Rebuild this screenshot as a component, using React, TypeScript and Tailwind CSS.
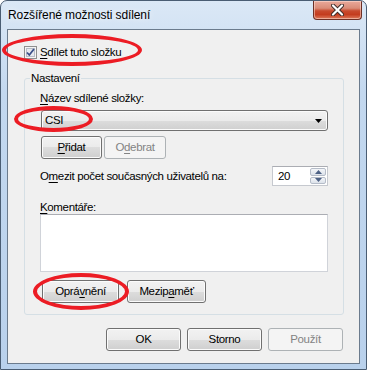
import React from "react";

const btn =
  "flex items-center justify-center h-[23px] rounded-[3px] border border-[#707070] bg-[linear-gradient(#f2f2f2_0%,#ebebeb_50%,#dddddd_50%,#cfcfcf_100%)] shadow-[inset_0_0_0_1px_#fbfbfb] text-black";
const btnDis =
  "flex items-center justify-center h-[23px] rounded-[3px] border border-[#adb2b5] bg-[#f4f4f4] text-[#838383]";

function U({ children }: { children: React.ReactNode }) {
  return <span className="underline underline-offset-[2px] decoration-[1px]">{children}</span>;
}

function CheckBox() {
  return (
    <svg width="13" height="13" viewBox="0 0 13 13" className="shrink-0">
      <rect x="0.5" y="0.5" width="12" height="12" fill="#f4f4f4" stroke="#8e8f8f" />
      <rect x="2.5" y="2.5" width="8" height="8" fill="#e6e9ee" stroke="#b6bcc6" />
      <path d="M3 6.5 L5.3 9 L10 3" fill="none" stroke="#3b5089" strokeWidth="1.8" strokeLinejoin="round" />
    </svg>
  );
}

export default function App() {
  return (
    <div className="relative w-[367px] h-[370px] overflow-hidden rounded-t-[7px] border border-[#4a5d73] bg-[linear-gradient(180deg,#dbe8f6_0%,#c3d8ef_25%,#b9d1ec_100%)] font-['Liberation_Sans',Arial,sans-serif] text-[11.5px] text-black tracking-[-0.35px]">
      {/* title bar */}
      <div className="flex h-[28px] items-start">
        <div className="pl-[7px] pt-[7px] text-[12px] tracking-[-0.1px] leading-[15px] [text-shadow:0_0_6px_#ffffff]">
          Rozšířené možnosti sdílení
        </div>
        <div className="ml-auto mr-[4px] flex h-[19px] w-[49px] items-center justify-center rounded-b-[4px] border border-t-0 border-[#6d3026] bg-[linear-gradient(#e9a99b_0%,#d98c78_40%,#c84a2e_55%,#c43c1f_75%,#dd7a5c_100%)] shadow-[inset_0_0_0_1px_rgba(255,230,220,0.5)]">
          <svg width="13" height="12" viewBox="0 0 13 12">
            <path d="M2 1.5 L11 10.5 M11 1.5 L2 10.5" stroke="#3b2a28" strokeWidth="4" strokeLinecap="round" />
            <path d="M2 1.5 L11 10.5 M11 1.5 L2 10.5" stroke="#ffffff" strokeWidth="2.2" strokeLinecap="round" />
          </svg>
        </div>
      </div>

      {/* client area */}
      <div className="mx-[6px] h-[335px] border border-[#6b7b8d] bg-[#f0f0f0] flex flex-col">
        <div className="ml-[16px] mt-[16px] flex h-[13px] items-center gap-[3px]">
          <CheckBox />
          <span className="leading-[15px]">
            <U>S</U>dílet tuto složku
          </span>
        </div>

        {/* group box */}
        <div className="relative ml-[16px] mt-[19px] h-[237px] w-[320px] rounded-[3px] border border-[#d5dfe5] flex flex-col">
          <span className="absolute -top-[8px] left-[5px] bg-[#f0f0f0] px-[1px] leading-[15px]">Nastavení</span>

          <div className="ml-[15px] mt-[12px] leading-[15px]">
            <U>N</U>ázev sdílené složky:
          </div>
          <div className="ml-[16px] mt-[4px] flex h-[21px] w-[287px] items-center rounded-[3px] border border-[#707070] bg-[linear-gradient(#f2f2f2_0%,#ebebeb_50%,#dddddd_50%,#cfcfcf_100%)] shadow-[inset_0_0_0_1px_#fbfbfb] pl-[3px] pr-[5px]">
            <span className="leading-[15px]">CSI</span>
            <svg width="7" height="4" viewBox="0 0 7 4" className="ml-auto">
              <path d="M0 0 H7 L3.5 4 Z" fill="#000" />
            </svg>
          </div>
          <div className="ml-[16px] mt-[5px] flex gap-[2px]">
            <div className={`${btn} w-[61px]`}>
              <span>
                <U>P</U>řidat
              </span>
            </div>
            <div className={`${btnDis} w-[62px]`}>
              <span>
                O<U>d</U>ebrat
              </span>
            </div>
          </div>

          <div className="ml-[15px] mt-[7px] flex h-[20px] w-[288px] items-center">
            <span className="leading-[15px]">
              O<U>m</U>ezit počet současných uživatelů na:
            </span>
            <div className="ml-auto flex h-[20px] w-[56px] border border-[#c6c9cf] border-t-[#abadb3] bg-white">
              <span className="pl-[5px] leading-[18px]">20</span>
              <div className="ml-auto mr-[1px] flex w-[16px] flex-col gap-[1px] py-[1px]">
                <div className="flex flex-1 items-center justify-center rounded-[2px] border border-[#b5bcc8] bg-[linear-gradient(#f4f6f9,#dce2ea)]">
                  <svg width="7" height="4" viewBox="0 0 7 4">
                    <path d="M0 4 H7 L3.5 0 Z" fill="#4d6185" />
                  </svg>
                </div>
                <div className="flex flex-1 items-center justify-center rounded-[2px] border border-[#b5bcc8] bg-[linear-gradient(#f4f6f9,#dce2ea)]">
                  <svg width="7" height="4" viewBox="0 0 7 4">
                    <path d="M0 0 H7 L3.5 4 Z" fill="#4d6185" />
                  </svg>
                </div>
              </div>
            </div>
          </div>

          <div className="ml-[15px] mt-[15px] leading-[13px]">
            <U>K</U>omentáře:
          </div>
          <div className="ml-[15px] mt-0 h-[58px] w-[288px] border border-[#d0d3d9] border-t-[#abadb3] bg-white" />

          <div className="ml-[17px] mt-[8px] flex gap-[8px]">
            <div className={`${btn} w-[77px]`}>
              <span>
                Oprá<U>v</U>nění
              </span>
            </div>
            <div className={`${btn} w-[79px]`}>
              <span>
                Mezip<U>a</U>měť
              </span>
            </div>
          </div>
        </div>

        <div className="mr-[16px] mt-[13px] flex justify-end gap-[6px]">
          <div className={`${btn} w-[75px]`}>OK</div>
          <div className={`${btn} w-[75px]`}>Storno</div>
          <div className={`${btnDis} w-[75px]`}>Použít</div>
        </div>
      </div>

      {/* red ellipses overlay */}
      <div className="pointer-events-none absolute left-[1px] top-[33px] h-[32px] w-[140px] rounded-[50%] border-[4px] border-[#ec1c24]" />
      <div className="pointer-events-none absolute left-[13px] top-[105px] h-[26px] w-[79px] rounded-[50%] border-[4px] border-[#ec1c24]" />
      <div className="pointer-events-none absolute left-[32px] top-[272px] h-[37px] w-[96px] rounded-[50%] border-[4px] border-[#ec1c24]" />
    </div>
  );
}
